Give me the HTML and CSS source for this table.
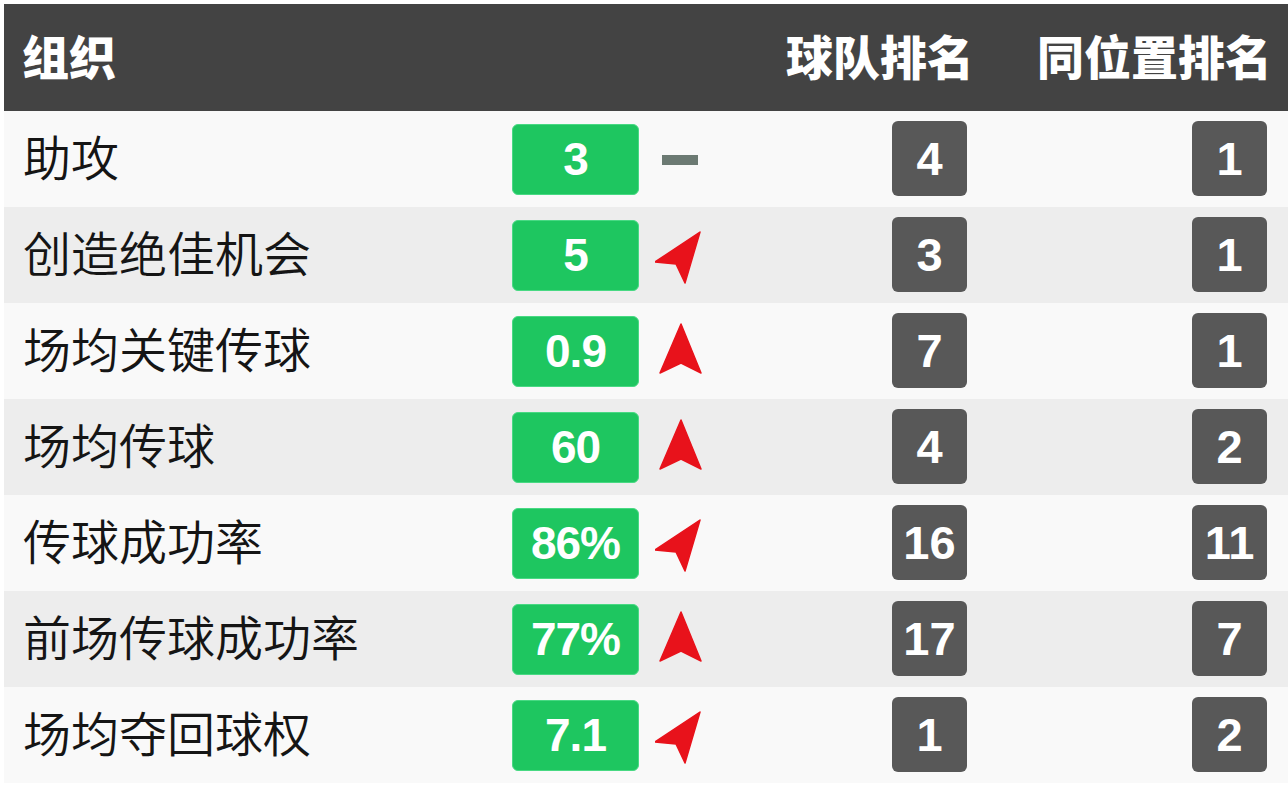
FILE: index.html
```html
<!DOCTYPE html>
<html lang="zh">
<head>
<meta charset="utf-8">
<link rel="stylesheet" href="styles.css">
</head>
<body>
<div class="table">
  <div class="head">
    <div class="h-title">组织</div>
    <div class="h-col">球队排名</div>
    <div class="h-col">同位置排名</div>
  </div>

  <div class="row odd">
    <div class="label">助攻</div>
    <div class="val">3</div>
    <div class="trend"><svg viewBox="0 0 48 60" width="48" height="60"><rect x="7" y="26" width="36" height="10" fill="#6c7a73"/></svg></div>
    <div class="rank">4</div>
    <div class="rank">1</div>
  </div>

  <div class="row even">
    <div class="label">创造绝佳机会</div>
    <div class="val">5</div>
    <div class="trend"><svg viewBox="0 0 48 60" width="48" height="60"><polygon class="ar" points="45,7 30,58 21,39 0,37"/></svg></div>
    <div class="rank">3</div>
    <div class="rank">1</div>
  </div>

  <div class="row odd">
    <div class="label">场均关键传球</div>
    <div class="val">0.9</div>
    <div class="trend"><svg viewBox="0 0 48 60" width="48" height="60"><polygon class="ar" points="26,3 46,52 26,42 5,52"/></svg></div>
    <div class="rank">7</div>
    <div class="rank">1</div>
  </div>

  <div class="row even">
    <div class="label">场均传球</div>
    <div class="val">60</div>
    <div class="trend"><svg viewBox="0 0 48 60" width="48" height="60"><polygon class="ar" points="26,3 46,52 26,42 5,52"/></svg></div>
    <div class="rank">4</div>
    <div class="rank">2</div>
  </div>

  <div class="row odd">
    <div class="label">传球成功率</div>
    <div class="val">86%</div>
    <div class="trend"><svg viewBox="0 0 48 60" width="48" height="60"><polygon class="ar" points="45,7 30,58 21,39 0,37"/></svg></div>
    <div class="rank">16</div>
    <div class="rank">11</div>
  </div>

  <div class="row even">
    <div class="label">前场传球成功率</div>
    <div class="val">77%</div>
    <div class="trend"><svg viewBox="0 0 48 60" width="48" height="60"><polygon class="ar" points="26,3 46,52 26,42 5,52"/></svg></div>
    <div class="rank">17</div>
    <div class="rank">7</div>
  </div>

  <div class="row odd">
    <div class="label">场均夺回球权</div>
    <div class="val">7.1</div>
    <div class="trend"><svg viewBox="0 0 48 60" width="48" height="60"><polygon class="ar" points="45,7 30,58 21,39 0,37"/></svg></div>
    <div class="rank">1</div>
    <div class="rank">2</div>
  </div>
</div>
</body>
</html>
```

FILE: styles.css
```css
html, body {
  margin: 0;
  padding: 0;
  background: #ffffff;
}
body {
  width: 1288px;
  height: 788px;
  overflow: hidden;
  font-family: "Noto Sans CJK SC", "Noto Sans", sans-serif;
}
.table {
  margin: 4px 0 0 4px;
  width: 1284px;
}
.head {
  height: 107px;
  background: #434343;
  display: flex;
  align-items: center;
  padding: 0 16px 6px 18px;
  box-sizing: border-box;
  color: #ffffff;
  font-weight: 900;
  font-size: 47px;
  line-height: 1;
}
.h-title {
  flex: 1;
}
.h-col + .h-col {
  margin-left: 63px;
}
.row {
  height: 96px;
  display: grid;
  grid-template-columns: 508px 127px 16px 48px 189px 75px 225px 75px;
  align-items: center;
}
.odd { background: #f9f9f9; }
.even { background: #ededed; }
.label {
  padding-left: 19px;
  font-size: 48px;
  font-weight: 350;
  color: #151515;
  line-height: 1;
  margin-top: -8px;
}
.val {
  height: 71px;
  background: #1ec660;
  border: 1px solid #48d983;
  box-sizing: border-box;
  border-radius: 6px;
  display: flex;
  align-items: center;
  justify-content: center;
  color: #ffffff;
  font-family: "Liberation Sans", Arial, sans-serif;
  font-weight: bold;
  font-size: 46px;
  letter-spacing: -1px;
}
.trend {
  grid-column: 4;
  display: flex;
  align-items: center;
}
.trend svg { display: block; }
.ar {
  fill: #e8121b;
  stroke: #e8121b;
  stroke-width: 1.5;
  stroke-linejoin: round;
}
.rank {
  height: 75px;
  background: #585858;
  border-radius: 6px;
  display: flex;
  align-items: center;
  justify-content: center;
  color: #ffffff;
  font-family: "Liberation Sans", Arial, sans-serif;
  font-weight: bold;
  font-size: 47px;
  margin-top: -2px;
}
.row .rank:nth-of-type(4) { grid-column: 6; }
.row .rank:nth-of-type(5) { grid-column: 8; }
```
